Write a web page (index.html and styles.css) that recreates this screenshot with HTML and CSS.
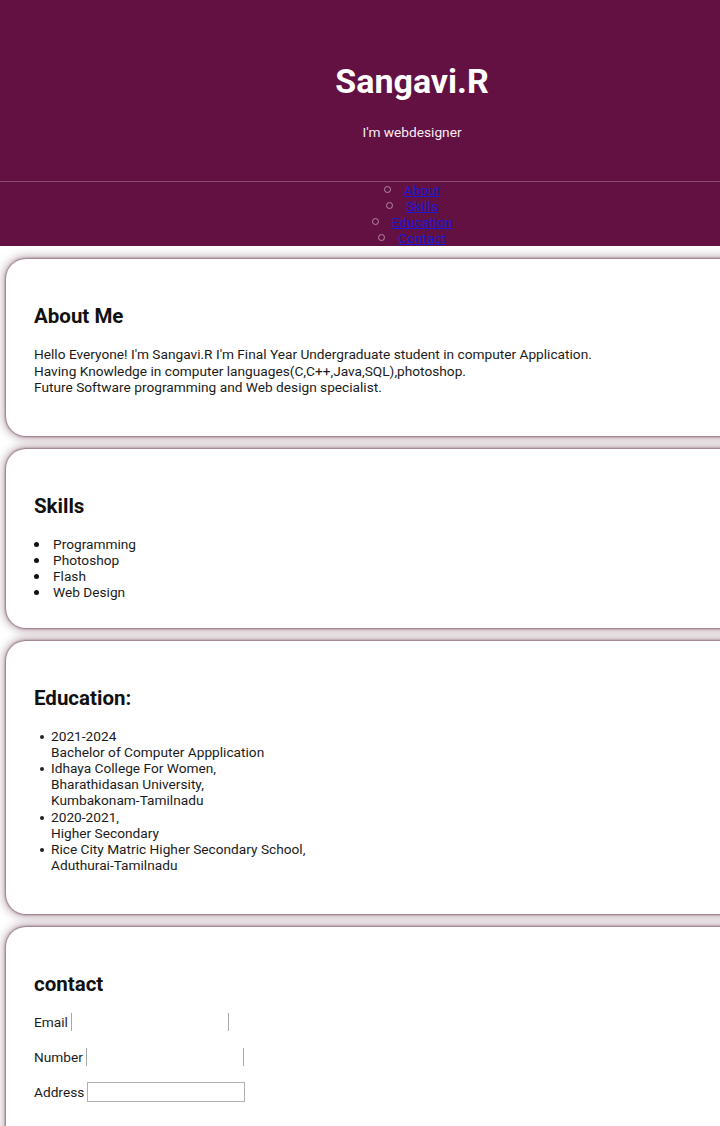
FILE: index.html
```html
<!DOCTYPE html>
<html lang="en">
<head>
<meta charset="utf-8">
<title>Sangavi.R</title>
<link rel="stylesheet" href="styles.css">
</head>
<body>
<div class="page">
  <header class="header">
    <div class="intro">
      <h1 class="name">Sangavi.R</h1>
      <p class="tagline">I'm webdesigner</p>
    </div>
    <nav class="nav">
      <ul class="nav-list">
        <li class="nav-item"><a href="#about">About</a></li>
        <li class="nav-item"><a href="#skills">Skills</a></li>
        <li class="nav-item"><a href="#education">Education</a></li>
        <li class="nav-item"><a href="#contact">Contact</a></li>
      </ul>
    </nav>
  </header>
  <main class="main">
    <section class="card card-about" id="about">
      <h2 class="card-title">About Me</h2>
      <p class="about-text">Hello Everyone! I'm Sangavi.R I'm Final Year Undergraduate student in computer Application.<br>Having Knowledge in computer languages(C,C++,Java,SQL),photoshop.<br>Future Software programming and Web design specialist.</p>
    </section>
    <section class="card card-skills" id="skills">
      <h2 class="card-title">Skills</h2>
      <ul class="skills-list">
        <li>Programming</li>
        <li>Photoshop</li>
        <li>Flash</li>
        <li>Web Design</li>
      </ul>
    </section>
    <section class="card card-edu" id="education">
      <h2 class="card-title">Education:</h2>
      <ul class="edu-list">
        <li>2021-2024<br>Bachelor of Computer Appplication</li>
        <li>Idhaya College For Women,<br>Bharathidasan University,<br>Kumbakonam-Tamilnadu</li>
        <li>2020-2021,<br>Higher Secondary</li>
        <li>Rice City Matric Higher Secondary School,<br>Aduthurai-Tamilnadu</li>
      </ul>
    </section>
    <section class="card card-contact" id="contact">
      <h2 class="card-title">contact</h2>
      <form class="contact-form">
        <div class="field"><label class="field-label" for="email">Email</label><input class="field-input sides" id="email" type="text"></div>
        <div class="field"><label class="field-label" for="number">Number</label><input class="field-input sides" id="number" type="text"></div>
        <div class="field"><label class="field-label" for="address">Address</label><input class="field-input boxed" id="address" type="text"></div>
      </form>
    </section>
  </main>
</div>
</body>
</html>
```
FILE: styles.css
```css
* { box-sizing: border-box; }
html, body { margin: 0; padding: 0; }
body {
  font-family: Roboto, "Noto Sans", "Liberation Sans", sans-serif;
  color: #1b1b1b;
  background: #ffffff;
  overflow-x: hidden;
}
.page { width: 824px; }

.header { background: #621142; color: #fff; }
.intro { padding-top: 61px; text-align: center; }
.name {
  margin: 0;
  font-size: 34px;
  line-height: 40px;
  font-weight: 700;
  color: #ffffff;
}
.tagline {
  margin: 23px 0 41px;
  font-size: 13.7px;
  line-height: 16px;
  color: #f6eef2;
}
.nav { border-top: 1px solid #8a4a6d; }
.nav-list {
  list-style: none;
  margin: 0;
  padding: 0;
  text-align: center;
}
.nav-item {
  font-size: 13.7px;
  line-height: 16px;
}
.nav-item::before {
  content: "";
  display: inline-block;
  width: 5px;
  height: 5px;
  border: 1px solid #b58aa4;
  border-radius: 50%;
  margin-right: 13px;
  vertical-align: 2px;
}
.nav-item a { color: #1d1ad6; text-decoration: underline; }

.main {
  display: flex;
  flex-direction: column;
  gap: 13px;
  padding: 13px 0 40px 6px;
}
.card {
  background: #fff;
  border-radius: 20px;
  padding: 45px 28px 28px;
  box-shadow: 0 0 2px 1px rgba(120, 80, 100, 0.7), 0 0 8px 3px rgba(120, 80, 100, 0.45);
}
.card-title {
  margin: 0;
  font-size: 20.5px;
  line-height: 24px;
  font-weight: 700;
  color: #111;
}
.about-text {
  margin: 18px 0 12px;
  font-size: 13.7px;
  line-height: 16.5px;
}
.skills-list {
  list-style: none;
  margin: 18px 0 0;
  padding: 0 0 0 19px;
  font-size: 13.7px;
  line-height: 16px;
}
.skills-list li::before {
  content: "";
  display: inline-block;
  width: 5px;
  height: 5px;
  border-radius: 50%;
  background: #111;
  margin-left: -19px;
  margin-right: 14px;
  vertical-align: 2px;
}
.edu-list {
  list-style: none;
  margin: 18px 0 13px;
  padding: 0 0 0 17px;
  font-size: 13.7px;
  line-height: 16.2px;
}
.edu-list li::before {
  content: "";
  display: inline-block;
  width: 4px;
  height: 4px;
  border-radius: 50%;
  background: #222;
  margin-left: -11px;
  margin-right: 7px;
  vertical-align: 2px;
}
.contact-form {
  display: flex;
  flex-direction: column;
  gap: 17px;
  margin-top: 17px;
  padding-bottom: 40px;
}
.field { display: flex; align-items: center; height: 18px; }
.field-label { font-size: 13.7px; line-height: 16px; margin-right: 3px; }
.field-input {
  width: 158px;
  height: 18px;
  padding: 0;
  background: #fff;
  font: inherit;
  outline: none;
}
.field-input.sides {
  border: none;
  border-left: 1px solid #a8a8a8;
  border-right: 1px solid #a8a8a8;
}
.field-input.boxed {
  height: 20px;
  border: 1px solid #b0b0b0;
}
```
